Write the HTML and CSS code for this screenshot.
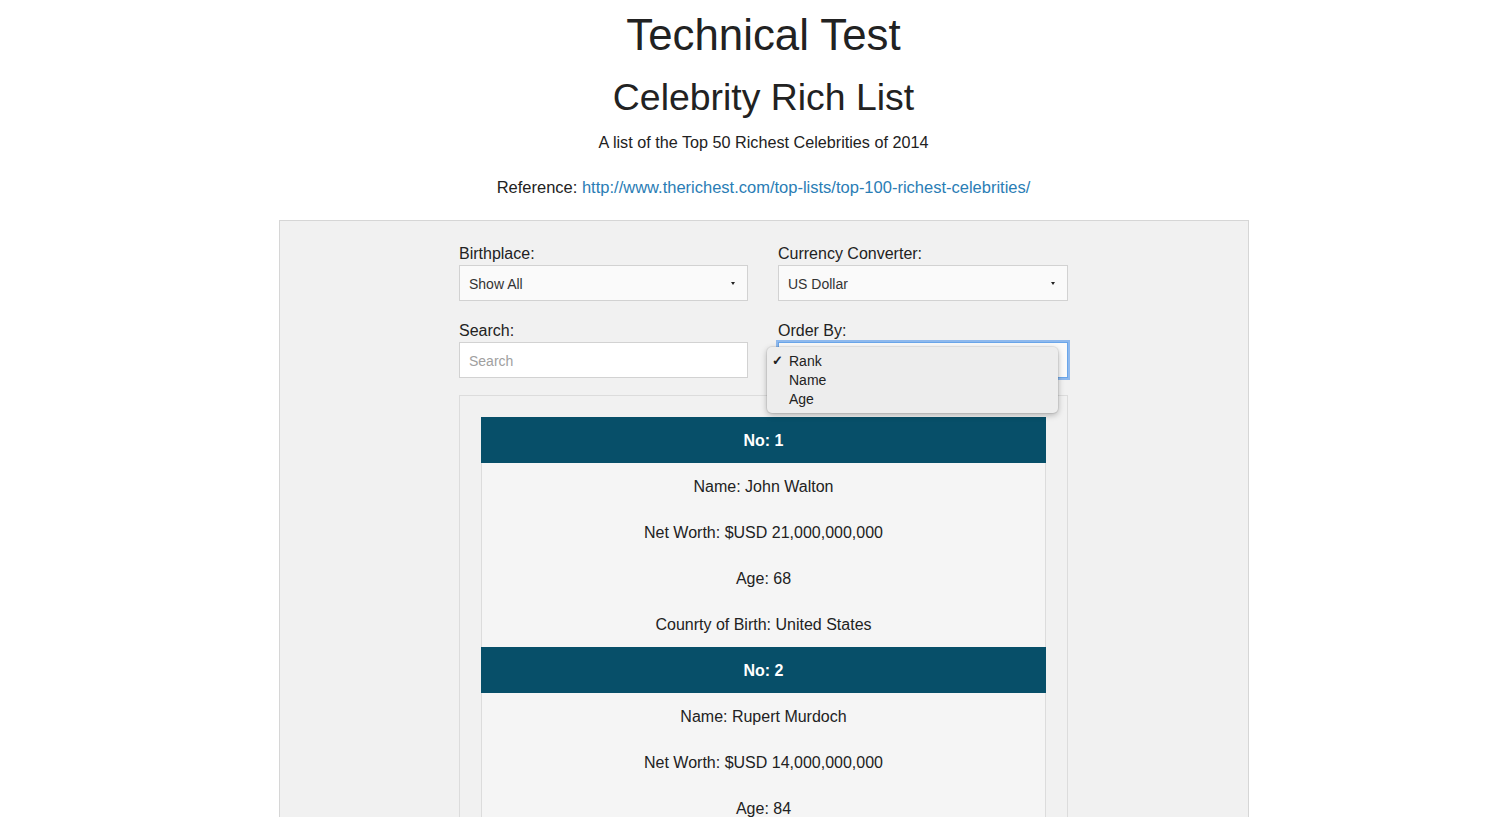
FILE: index.html
```html
<!DOCTYPE html>
<html lang="en">
<head>
<meta charset="utf-8">
<title>Technical Test</title>
<link rel="stylesheet" href="styles.css">
</head>
<body>
<div class="page">
  <header class="intro">
    <h1 class="title">Technical Test</h1>
    <h2 class="subtitle">Celebrity Rich List</h2>
    <p class="lead">A list of the Top 50 Richest Celebrities of 2014</p>
    <p class="ref">Reference: <a class="link" href="#">http://www.therichest.com/top-lists/top-100-richest-celebrities/</a></p>
  </header>
  <main class="panel">
    <div class="controls">
      <div class="field">
        <div class="label">Birthplace:</div>
        <div class="select"><span>Show All</span><span class="caret"></span></div>
      </div>
      <div class="field">
        <div class="label">Currency Converter:</div>
        <div class="select"><span>US Dollar</span><span class="caret"></span></div>
      </div>
      <div class="field">
        <div class="label">Search:</div>
        <div class="input"><span class="placeholder">Search</span></div>
      </div>
      <div class="field field-menu">
        <div class="label">Order By:</div>
        <div class="select focused"><span>Rank</span><span class="caret"></span></div>
        <ul class="menu">
          <li class="menu-item checked"><span class="check">&#10003;</span>Rank</li>
          <li class="menu-item"><span class="check"></span>Name</li>
          <li class="menu-item"><span class="check"></span>Age</li>
        </ul>
      </div>
    </div>
    <div class="list">
      <section class="card">
        <div class="card-head">No: 1</div>
        <div class="card-row">Name: John Walton</div>
        <div class="card-row">Net Worth: $USD 21,000,000,000</div>
        <div class="card-row">Age: 68</div>
        <div class="card-row">Counrty of Birth: United States</div>
      </section>
      <section class="card">
        <div class="card-head">No: 2</div>
        <div class="card-row">Name: Rupert Murdoch</div>
        <div class="card-row">Net Worth: $USD 14,000,000,000</div>
        <div class="card-row">Age: 84</div>
        <div class="card-row">Counrty of Birth: Australia</div>
      </section>
    </div>
  </main>
</div>
</body>
</html>
```

FILE: styles.css
```css
html {
  overflow: hidden;
}
body {
  margin: 0;
  padding: 0 0 0 20px;
  font-family: "Liberation Sans", Arial, Helvetica, sans-serif;
  color: #333;
  background: #fff;
}
.page {
  width: 970px;
  margin: 0 auto;
}
.intro {
  text-align: center;
  padding-top: 11px;
}
.title {
  margin: 0;
  font-size: 43.8px;
  line-height: 48px;
  font-weight: normal;
  color: #222;
}
.subtitle {
  margin: 17px 0 0;
  font-size: 37.4px;
  line-height: 42px;
  font-weight: normal;
  color: #222;
}
.lead {
  margin: 13px 0 0;
  font-size: 16.2px;
  line-height: 22px;
  color: #222;
}
.ref {
  margin: 23px 0 0;
  font-size: 16.5px;
  line-height: 22px;
  color: #222;
}
.link {
  color: #2a7db5;
  text-decoration: none;
}
.panel {
  margin-top: 22px;
  background: #f1f1f1;
  border: 1px solid #d6d6d6;
  padding: 22px 0 40px;
}
.controls {
  width: 609px;
  margin: 0 auto;
  display: grid;
  grid-template-columns: 289px 290px;
  column-gap: 30px;
  row-gap: 19px;
}
.field {
  position: relative;
}
.label {
  font-size: 16px;
  line-height: 20px;
  padding-top: 1px;
  margin-bottom: 1px;
  color: #222;
}
.select,
.input {
  box-sizing: border-box;
  height: 36px;
  border: 1px solid #d2d2d2;
  background: #fafafa;
  display: flex;
  align-items: center;
  justify-content: space-between;
  padding: 1px 12px 0 9px;
  font-size: 14px;
  color: #333;
}
.input {
  background: #fff;
}
.placeholder {
  color: #a0a0a0;
}
.caret {
  width: 0;
  height: 0;
  border-left: 2.5px solid transparent;
  border-right: 2.5px solid transparent;
  border-top: 3px solid #222;
}
.focused {
  border-color: #6aa6ea;
  box-shadow: 0 0 0 2px rgba(110, 165, 235, 0.75);
}
.menu {
  position: absolute;
  left: -11px;
  top: 27px;
  width: 291px;
  height: 66px;
  box-sizing: border-box;
  margin: 0;
  padding: 4px 0 0;
  list-style: none;
  background: #ededed;
  border-radius: 5px;
  box-shadow: 0 2px 6px rgba(0, 0, 0, 0.28), 0 0 0 1px rgba(0, 0, 0, 0.06);
}
.menu-item {
  display: flex;
  align-items: center;
  height: 19px;
  font-size: 14px;
  color: #222;
}
.check {
  display: inline-block;
  width: 22px;
  box-sizing: border-box;
  padding-left: 5px;
  font-size: 13px;
  font-weight: bold;
  text-align: left;
}
.list {
  width: 609px;
  box-sizing: border-box;
  margin: 17px auto 0;
  border: 1px solid #dcdcdc;
  background: #f1f1f1;
  padding: 21px 21px;
}
.card {
  background: #f5f5f5;
  border-left: 1px solid #dcdcdc;
  border-right: 1px solid #dcdcdc;
}
.card-head {
  background: #074f69;
  color: #fff;
  height: 46px;
  line-height: 48px;
  text-align: center;
  font-size: 16px;
  font-weight: bold;
  margin: 0 -1px;
}
.card-row {
  height: 46px;
  line-height: 48px;
  text-align: center;
  font-size: 16px;
  color: #222;
}
```
